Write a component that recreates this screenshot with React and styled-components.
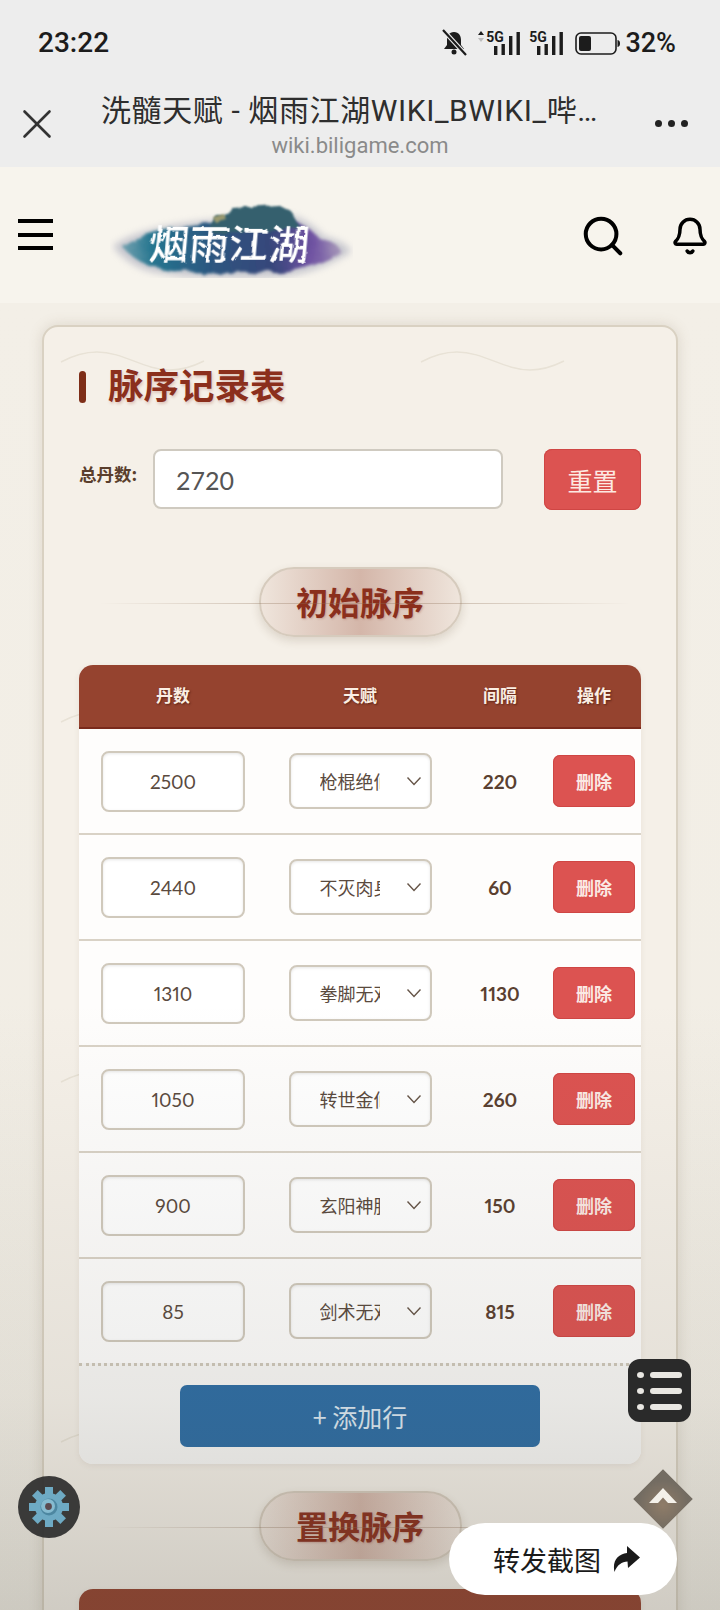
import styled, { createGlobalStyle } from 'styled-components';
import { Search, Bell, X } from 'lucide-react';

const cjk = `"Noto Sans CJK SC", "Noto Sans", sans-serif`;
const num = `Lato, "Noto Sans CJK SC", sans-serif`;

const initialRows = [
  { id: 1, dan: 2500, talent: '枪棍绝仙', gap: 220 },
  { id: 2, dan: 2440, talent: '不灭肉身', gap: 60 },
  { id: 3, dan: 1310, talent: '拳脚无双', gap: 1130 },
  { id: 4, dan: 1050, talent: '转世金仙', gap: 260 },
  { id: 5, dan: 900, talent: '玄阳神脉', gap: 150 },
  { id: 6, dan: 85, talent: '剑术无双', gap: 815 },
];

const waveTile = `url("data:image/svg+xml,%3Csvg xmlns='http://www.w3.org/2000/svg' width='360' height='360'%3E%3Cpath d='M17 35C30 28 42 25 53 25C80 25 100 43 126 43C138 43 150 39 160 34' fill='none' stroke='%23e8e2d6' stroke-width='1.5'/%3E%3C/svg%3E")`;

const chevron = `url("data:image/svg+xml,%3Csvg xmlns='http://www.w3.org/2000/svg' width='16' height='10'%3E%3Cpath d='M1.5 1.5L8 8.5L14.5 1.5' fill='none' stroke='%23665548' stroke-width='1.4'/%3E%3C/svg%3E")`;

function StatusIcons() {
  return (
    <StatusSvg width="182" height="28" viewBox="0 0 182 28">
      {/* muted bell */}
      <path d="M12 3c-5 0-7 4-7 8v5l-3 4h20l-3-4v-5c0-4-2-8-7-8z" fill="#1c1c1c" />
      <circle cx="12" cy="23" r="2.5" fill="#1c1c1c" />
      <path d="M2 2l22 24" stroke="#ededed" strokeWidth="4.5" />
      <path d="M1 1l23 25" stroke="#1c1c1c" strokeWidth="2.2" />
      {/* first sim */}
      <path d="M36 6l3-4 3 4z" fill="#1c1c1c" />
      <path d="M36 9l3 4 3-4z" fill="#bbb" />
      <SimLabel x="53" y="13">5G</SimLabel>
      <rect x="52" y="17" width="3.4" height="9" fill="#1c1c1c" />
      <rect x="59.5" y="15" width="3.4" height="11" fill="#1c1c1c" />
      <rect x="67" y="7" width="3.4" height="19" fill="#1c1c1c" />
      <rect x="74.5" y="3" width="3.4" height="23" fill="#1c1c1c" />
      {/* second sim */}
      <SimLabel x="96" y="13">5G</SimLabel>
      <rect x="95" y="17" width="3.4" height="9" fill="#1c1c1c" />
      <rect x="102.5" y="15" width="3.4" height="11" fill="#1c1c1c" />
      <rect x="110" y="7" width="3.4" height="19" fill="#1c1c1c" />
      <rect x="117.5" y="3" width="3.4" height="23" fill="#1c1c1c" />
      {/* battery */}
      <rect x="134" y="4" width="40" height="21" rx="5" fill="none" stroke="#1c1c1c" strokeWidth="1.6" />
      <rect x="137" y="7" width="12" height="15" rx="2" fill="#1c1c1c" />
      <path d="M175.5 11c2 .5 2.5 1.5 2.5 3.5s-.5 3-2.5 3.5z" fill="#1c1c1c" />
    </StatusSvg>
  );
}

function GameLogo() {
  return (
    <svg width="243" height="76" viewBox="0 0 243 76">
      <defs>
        <linearGradient id="inkFill" x1="0" x2="1" y1="0" y2="0">
          <stop offset="0" stopColor="#6f9fae" />
          <stop offset="0.14" stopColor="#25758f" />
          <stop offset="0.4" stopColor="#2c5780" />
          <stop offset="0.68" stopColor="#36467a" />
          <stop offset="0.86" stopColor="#6f52a2" />
          <stop offset="1" stopColor="#a596b8" />
        </linearGradient>
        <filter id="inkEdge" x="-10%" y="-30%" width="120%" height="160%">
          <feTurbulence type="fractalNoise" baseFrequency="0.06" numOctaves="3" seed="4" />
          <feDisplacementMap in="SourceGraphic" scale="8" />
          <feGaussianBlur stdDeviation="1.6" />
        </filter>
        <filter id="inkHalo" x="-10%" y="-30%" width="120%" height="160%">
          <feGaussianBlur stdDeviation="3.5" />
        </filter>
        <filter id="roofEdge" x="-10%" y="-30%" width="120%" height="160%">
          <feTurbulence type="fractalNoise" baseFrequency="0.09" numOctaves="2" seed="7" />
          <feDisplacementMap in="SourceGraphic" scale="5" />
          <feGaussianBlur stdDeviation="0.8" />
        </filter>
        <filter id="brushEdge" x="-5%" y="-10%" width="110%" height="120%">
          <feTurbulence type="fractalNoise" baseFrequency="0.12" numOctaves="2" seed="3" />
          <feDisplacementMap in="SourceGraphic" scale="3" />
        </filter>
      </defs>
      <path d="M3 44C24 28 62 22 100 18L185 14C200 20 208 28 214 34C228 38 238 42 241 50C222 62 196 74 165 75C110 77 52 76 30 66C18 60 8 52 3 44Z" fill="#9a9db2" opacity="0.5" filter="url(#inkHalo)" />
      <path d="M12 44C32 30 64 26 100 22L182 18C196 24 204 30 210 37C220 40 230 44 232 50C214 60 192 70 162 70C110 72 56 71 36 62C26 57 16 50 12 44Z" fill="url(#inkFill)" filter="url(#inkEdge)" />
      <path d="M100 24L106 13L114 14L122 6L168 3L182 10L190 26L150 30L104 32Z" fill="#35606e" filter="url(#roofEdge)" />
      <path d="M103 15l11-3 2 5-11 3z" fill="#9a9a70" filter="url(#roofEdge)" />
      <LogoText x="43" y="57" transform="skewX(-5)" filter="url(#brushEdge)">烟雨江湖</LogoText>
    </svg>
  );
}

function GearIcon() {
  const teeth = [0, 45, 90, 135, 180, 225, 270, 315];
  return (
    <svg width="42" height="42" viewBox="0 0 42 42">
      {teeth.map((deg) => (
        <rect key={deg} x="17" y="1" width="8" height="10" fill="#6eaac4" transform={`rotate(${deg} 21 21)`} />
      ))}
      <circle cx="21" cy="21" r="14" fill="#6eaac4" />
      <circle cx="21" cy="21" r="8.5" fill="#4d87a1" />
      <circle cx="20" cy="20" r="7" fill="#86bbd0" />
      <circle cx="20.5" cy="20.5" r="3.4" fill="#5b4a50" />
    </svg>
  );
}

function TalentRow({ row }) {
  return (
    <tr>
      <Cell>
        <DanInput defaultValue={row.dan} />
      </Cell>
      <Cell>
        <TalentSelect defaultValue={row.talent}>
          <option>{row.talent}</option>
        </TalentSelect>
      </Cell>
      <GapCell>{row.gap}</GapCell>
      <Cell>
        <DeleteBtn>删除</DeleteBtn>
      </Cell>
    </tr>
  );
}

function TableHead() {
  return (
    <thead>
      <tr>
        <HeadCell>丹数</HeadCell>
        <HeadCell>天赋</HeadCell>
        <HeadCell>间隔</HeadCell>
        <HeadCell>操作</HeadCell>
      </tr>
    </thead>
  );
}

function App() {
  return (
    <Screen>
      <GlobalStyle />
      <StatusBar>
        <Clock>23:22</Clock>
        <StatusRight>
          <StatusIcons />
          <Battery>32%</Battery>
        </StatusRight>
      </StatusBar>

      <BrowserBar>
        <CloseBtn>
          <X size={50} strokeWidth={1.25} color="#333" />
        </CloseBtn>
        <BrowserTitle>
          <PageName>洗髓天赋 - 烟雨江湖WIKI_BWIKI_哔哩哔哩</PageName>
          <PageHost>wiki.biligame.com</PageHost>
        </BrowserTitle>
        <MoreDots>
          <i />
          <i />
          <i />
        </MoreDots>
      </BrowserBar>

      <SiteHeader>
        <Burger>
          <i />
          <i />
          <i />
        </Burger>
        <LogoBox>
          <GameLogo />
        </LogoBox>
        <HeaderTools>
          <Search size={46} strokeWidth={2.1} color="#000" />
          <Bell size={40} strokeWidth={2.1} color="#000" />
        </HeaderTools>
      </SiteHeader>

      <Main>
        <Card>
          <CardTitle>脉序记录表</CardTitle>

          <TotalRow>
            <TotalLabel>总丹数:</TotalLabel>
            <TotalInput defaultValue="2720" />
            <ResetBtn>重置</ResetBtn>
          </TotalRow>

          <SectionHead>
            <SectionPill>初始脉序</SectionPill>
          </SectionHead>

          <TableWrap>
            <Table>
              <colgroup>
                <col style={{ width: 188 }} />
                <col style={{ width: 186 }} />
                <col style={{ width: 94 }} />
                <col style={{ width: 94 }} />
              </colgroup>
              <TableHead />
              <tbody>
                {initialRows.map((row) => (
                  <TalentRow key={row.id} row={row} />
                ))}
              </tbody>
            </Table>
            <TableFoot>
              <AddBtn>+ 添加行</AddBtn>
            </TableFoot>
          </TableWrap>

          <SectionHead>
            <SectionPill>置换脉序</SectionPill>
          </SectionHead>

          <TableWrap>
            <Table>
              <TableHead />
            </Table>
          </TableWrap>
        </Card>
      </Main>

      <Dimmer />

      <GearBtn>
        <GearIcon />
      </GearBtn>
      <TocBtn>
        <TocLine />
        <TocLine />
        <TocLine />
      </TocBtn>
      <TopBtn>
        <svg width="28" height="15" viewBox="0 0 28 15">
          <path d="M0 15L14 0L28 15L19 15L14 9.5L9 15Z" fill="#f4f1ea" />
        </svg>
      </TopBtn>
      <ShareBtn>
        转发截图
        <svg width="27" height="26" viewBox="0 0 27 26">
          <path d="M14 0L27 11.5L15 22L14.5 15.5C9 15.5 4 19 1.5 26C-1 15 5 8 14 7Z" fill="#1a1a1a" />
        </svg>
      </ShareBtn>
    </Screen>
  );
}

const GlobalStyle = createGlobalStyle`
  html, body {
    margin: 0;
    padding: 0;
    background: #f3efe7;
  }
  * {
    box-sizing: border-box;
  }
`;

const Screen = styled.div`
  position: relative;
  width: 720px;
  height: 1610px;
  overflow: hidden;
  font-family: ${cjk};
  background: #f3efe7;
`;

const StatusBar = styled.div`
  height: 80px;
  background: #ededed;
  padding: 25px 44px 0 38px;
  display: flex;
  justify-content: space-between;
  align-items: flex-start;
`;

const Clock = styled.div`
  font: 500 28px/36px Roboto, sans-serif;
  color: #1c1c1c;
`;

const StatusRight = styled.div`
  display: flex;
  align-items: center;
  height: 36px;
  gap: 1px;
`;

const StatusSvg = styled.svg`
  display: block;
`;

const SimLabel = styled.text`
  font: 700 14px Roboto, sans-serif;
  fill: #1c1c1c;
  text-anchor: middle;
`;

const Battery = styled.div`
  font: 500 27px/36px Roboto, sans-serif;
  color: #1c1c1c;
`;

const BrowserBar = styled.div`
  height: 87px;
  background: #ededed;
  display: flex;
  align-items: flex-start;
`;

const CloseBtn = styled.div`
  width: 73px;
  height: 87px;
  padding: 19px 0 0 12px;
  flex: none;
`;

const BrowserTitle = styled.div`
  width: 574px;
  flex: none;
  text-align: center;
`;

const PageName = styled.div`
  width: 500px;
  margin: 9px 0 0 28px;
  font-family: Roboto, ${cjk};
  font-size: 30px;
  line-height: 44px;
  letter-spacing: 0.6px;
  color: #2e2e2e;
  text-align: left;
  white-space: nowrap;
  overflow: hidden;
  text-overflow: ellipsis;
`;

const PageHost = styled.div`
  font: 400 22px/26px Roboto, sans-serif;
  color: #8a8a8a;
`;

const MoreDots = styled.div`
  display: flex;
  gap: 6px;
  margin: 40px 0 0 8px;

  i {
    width: 7px;
    height: 7px;
    border-radius: 50%;
    background: #222;
  }
`;

const SiteHeader = styled.div`
  height: 136px;
  background: #f7f4ed;
  display: flex;
  align-items: flex-start;
  padding: 35px 10px 0 18px;
`;

const Burger = styled.div`
  width: 35px;
  display: flex;
  flex-direction: column;
  gap: 9.5px;
  margin-top: 17px;

  i {
    height: 4px;
    background: #000;
  }
`;

const LogoBox = styled.div`
  margin-left: 57px;
  line-height: 0;
`;

const LogoText = styled.text`
  font-family: ${cjk};
  font-size: 40px;
  font-weight: 500;
  fill: #fff;
`;

const HeaderTools = styled.div`
  margin-left: auto;
  display: flex;
  align-items: center;
  gap: 44px;
  margin-top: 11px;
`;

const Main = styled.div`
  padding: 22px 42px 0;
  background: linear-gradient(#f3efe7, #f1ede4);
`;

const Card = styled.div`
  width: 636px;
  padding: 44px 35px 0;
  border: 2px solid #d9d1c2;
  border-radius: 16px;
  background-color: #f5f0e8;
  background-image: ${waveTile};
  background-size: 360px 360px;
  box-shadow: 0 0 14px rgba(120, 100, 70, 0.18);
`;

const CardTitle = styled.h2`
  margin: 0;
  height: 32px;
  display: flex;
  align-items: flex-start;
  gap: 22px;
  font-size: 35.5px;
  font-weight: 700;
  line-height: 26px;
  color: #8b2f1c;
  text-shadow: 1px 2px 3px rgba(139, 47, 28, 0.22);

  &::before {
    content: '';
    width: 7px;
    height: 32px;
    border-radius: 4px;
    background: #7e2e18;
  }
`;

const TotalRow = styled.div`
  display: flex;
  align-items: flex-start;
  margin-top: 46px;
`;

const TotalLabel = styled.label`
  width: 74px;
  flex: none;
  font-size: 17.5px;
  line-height: 50px;
  font-weight: 700;
  color: #5a3e2c;
`;

const TotalInput = styled.input`
  width: 350px;
  height: 60px;
  padding: 2px 21px 0;
  border: 2px solid #cfcac0;
  border-radius: 8px;
  background: #fff;
  font: 400 25px ${num};
  color: #555;
  outline: none;
`;

const ResetBtn = styled.button`
  width: 97px;
  height: 61px;
  margin-left: 41px;
  border: none;
  border-radius: 8px;
  background: #dc5351;
  box-shadow: inset 0 0 0 1px #cf4644;
  font-family: ${cjk};
  font-size: 25px;
  color: #fde9e2;
`;

const SectionHead = styled.div`
  position: relative;
  display: flex;
  justify-content: center;
  margin: 27px 0 28px;

  ${TotalRow} + & {
    margin-top: 57px;
  }

  &::after {
    content: '';
    position: absolute;
    left: 20px;
    right: 10px;
    top: 36px;
    height: 1px;
    background: linear-gradient(
      to right,
      rgba(140, 110, 85, 0),
      rgba(140, 110, 85, 0.32) 30%,
      rgba(140, 110, 85, 0.32) 70%,
      rgba(140, 110, 85, 0)
    );
  }
`;

const SectionPill = styled.div`
  width: 203px;
  height: 70px;
  border: 2px solid #d6cbbd;
  border-radius: 35px;
  background: linear-gradient(to right, #efe5dc, #d4b6a9 50%, #efe5dc);
  box-shadow: 0 4px 10px rgba(90, 60, 40, 0.16);
  text-align: center;
  font-size: 32px;
  font-weight: 700;
  line-height: 64px;
  color: #8b2f1c;
  text-shadow: 1px 1px 2px rgba(139, 47, 28, 0.25);
`;

const TableWrap = styled.div`
  border-radius: 14px;
  overflow: hidden;
  background: #fefdfc;
  box-shadow: 0 2px 6px rgba(90, 70, 50, 0.08);
`;

const Table = styled.table`
  width: 562px;
  table-layout: fixed;
  border-collapse: collapse;
`;

const HeadCell = styled.th`
  height: 63px;
  padding: 0 0 3px;
  background: #95432f;
  border-bottom: 2px solid #7a2a1c;
  font-size: 17px;
  font-weight: 700;
  color: #fbefe4;
  text-shadow: 1px 1px 2px rgba(60, 20, 10, 0.6);
`;

const Cell = styled.td`
  height: 106px;
  padding: 0;
  text-align: center;
  border-bottom: 2px solid #d9d2c6;
  vertical-align: middle;
`;

const GapCell = styled(Cell)`
  font: 700 19px/1 ${num};
  font-variant-numeric: proportional-nums;
  color: #5a4030;
`;

const DanInput = styled.input`
  display: block;
  width: 144px;
  height: 61px;
  margin: 0 auto;
  border: 2px solid #d0c9bc;
  border-radius: 8px;
  background: #fff;
  box-shadow: inset 0 1px 3px rgba(0, 0, 0, 0.1);
  text-align: center;
  font: 400 19px ${num};
  font-variant-numeric: proportional-nums;
  color: #5a4a3e;
  outline: none;
`;

const TalentSelect = styled.select`
  appearance: none;
  display: block;
  width: 143px;
  height: 56px;
  margin: 0 auto;
  padding: 0 50px 0 29px;
  border: 2px solid #d0c9bc;
  border-radius: 8px;
  background-color: #fff;
  background-image: ${chevron};
  background-repeat: no-repeat;
  background-position: right 8px center;
  box-shadow: inset 0 1px 3px rgba(0, 0, 0, 0.1);
  font-family: ${cjk};
  font-size: 18px;
  color: #5a4a3e;
  outline: none;
`;

const DeleteBtn = styled.button`
  display: block;
  width: 82px;
  height: 52px;
  margin: 0 auto;
  border: none;
  border-radius: 7px;
  background: #dc5351;
  box-shadow: inset 0 0 0 1px #cf4644;
  font-family: ${cjk};
  font-size: 18px;
  font-weight: 700;
  color: #fbe9e4;
`;

const TableFoot = styled.div`
  height: 101px;
  padding-top: 19px;
  margin-top: -2px;
  border-top: 3px dotted #cfc8ba;
  background: #f8f7f5;
  display: flex;
  justify-content: center;
`;

const AddBtn = styled.button`
  width: 360px;
  height: 62px;
  border: none;
  border-radius: 7px;
  background: #2e6da4;
  font-family: ${cjk};
  font-size: 25px;
  color: #dce8f2;
`;

const Dimmer = styled.div`
  position: absolute;
  left: 0;
  right: 0;
  top: 1000px;
  bottom: 0;
  pointer-events: none;
  background: linear-gradient(
    rgba(70, 70, 60, 0),
    rgba(70, 70, 60, 0.09) 65%,
    rgba(70, 70, 60, 0.21)
  );
`;

const GearBtn = styled.div`
  position: absolute;
  left: 18px;
  top: 1476px;
  width: 62px;
  height: 62px;
  border-radius: 50%;
  background: rgba(45, 45, 45, 0.92);
  display: flex;
  align-items: center;
  justify-content: center;
`;

const TocBtn = styled.div`
  position: absolute;
  left: 628px;
  top: 1359px;
  width: 63px;
  height: 63px;
  border-radius: 12px;
  background: #2a2a2a;
  display: flex;
  flex-direction: column;
  justify-content: center;
  gap: 10px;
  padding: 0 9px;
`;

const TocLine = styled.div`
  position: relative;
  height: 6px;
  margin-left: 13px;
  border-radius: 3px;
  background: #e9e7e2;

  &::before {
    content: '';
    position: absolute;
    left: -13px;
    top: 0;
    width: 7px;
    height: 6px;
    border-radius: 50%;
    background: #e9e7e2;
  }
`;

const TopBtn = styled.div`
  position: absolute;
  left: 633px;
  top: 1469px;
  width: 60px;
  height: 60px;
  display: flex;
  align-items: center;
  justify-content: center;
  padding-bottom: 8px;

  &::before {
    content: '';
    position: absolute;
    left: 9px;
    top: 9px;
    width: 42px;
    height: 42px;
    transform: rotate(45deg);
    background: radial-gradient(circle at 60% 60%, #8f7c68, #736c62 70%);
    filter: blur(0.6px);
  }

  svg {
    position: relative;
  }
`;

const ShareBtn = styled.div`
  position: absolute;
  left: 449px;
  top: 1523px;
  width: 228px;
  height: 72px;
  border-radius: 36px;
  background: #fff;
  display: flex;
  align-items: center;
  gap: 12px;
  padding-left: 44px;
  font-size: 27px;
  color: #1a1a1a;
`;

export default App;
